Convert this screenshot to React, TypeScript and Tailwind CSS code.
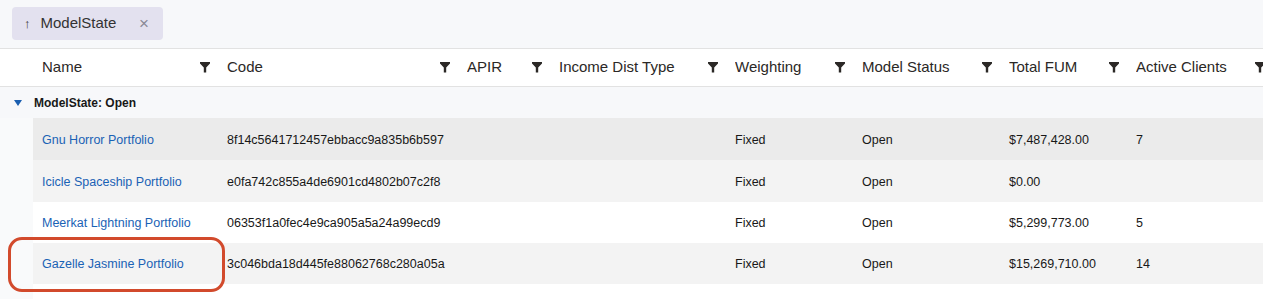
import React from 'react';

const columns = [
  { label: 'Name', w: 'w-[185px]' },
  { label: 'Code', w: 'w-[240px]' },
  { label: 'APIR', w: 'w-[92px]' },
  { label: 'Income Dist Type', w: 'w-[176px]' },
  { label: 'Weighting', w: 'w-[127px]' },
  { label: 'Model Status', w: 'w-[147px]' },
  { label: 'Total FUM', w: 'w-[127px]' },
  { label: 'Active Clients', w: 'w-[146px]' },
];

const rows = [
  { name: 'Gnu Horror Portfolio', code: '8f14c5641712457ebbacc9a835b6b597', fum: '$7,487,428.00', clients: '7', bg: 'bg-[#ebebeb]', h: 'h-[42px]' },
  { name: 'Icicle Spaceship Portfolio', code: 'e0fa742c855a4de6901cd4802b07c2f8', fum: '$0.00', clients: '', bg: 'bg-[#f3f3f3]', h: 'h-[42px]' },
  { name: 'Meerkat Lightning Portfolio', code: '06353f1a0fec4e9ca905a5a24a99ecd9', fum: '$5,299,773.00', clients: '5', bg: 'bg-white', h: 'h-[41px]' },
  { name: 'Gazelle Jasmine Portfolio', code: '3c046bda18d445fe88062768c280a05a', fum: '$15,269,710.00', clients: '14', bg: 'bg-[#f3f3f3]', h: 'h-[41px]' },
];

function Funnel() {
  return (
    <svg width="10" height="11" viewBox="0 0 10 11" className="shrink-0">
      <polygon points="0,0 10,0 10,1.6 6.2,5.6 6.2,10.5 3.8,10.5 3.8,5.6 0,1.6" fill="#2b2826" />
    </svg>
  );
}

function Cell({ w, children, className = '' }: { w: string; children?: React.ReactNode; className?: string }) {
  return <div className={`${w} shrink-0 pl-[9px] pr-1 whitespace-nowrap overflow-hidden ${className}`}>{children}</div>;
}

export default function App() {
  return (
    <div className="relative w-[1263px] h-[299px] overflow-hidden bg-white text-[#181818]" style={{ fontFamily: '"Liberation Sans", Arial, sans-serif' }}>
      {/* grouping bar */}
      <div className="h-[48px] bg-[#f7f8fa] pl-[12px] pt-[7px]">
        <div className="w-[151px] h-[33px] rounded-[4px] bg-[#e3e1ef] flex items-center pl-[12px] text-[15px] text-[#333]">
          <span className="text-[13px] mr-[10px]">↑</span>
          <span>ModelState</span>
          <span className="ml-auto mr-[14px] text-[#8a8a96] text-[17px] leading-none">×</span>
        </div>
      </div>

      {/* header */}
      <div className="flex h-[39px] items-center bg-white border-y border-[#e2e2e2]">
        <div className="w-[33px] shrink-0" />
        {columns.map((c) => (
          <div key={c.label} className={`${c.w} shrink-0 pl-[9px] pr-[8px] flex items-center text-[15px] text-[#2b2826]`}>
            <span className="truncate">{c.label}</span>
            <span className="ml-auto">
              <Funnel />
            </span>
          </div>
        ))}
      </div>

      {/* group row */}
      <div className="flex h-[31px] items-center bg-[#f7f8fa] text-[12px] font-bold text-[#181818]">
        <div className="w-[34px] shrink-0 flex justify-center pl-[2px]">
          <svg width="8" height="6" viewBox="0 0 8 6">
            <polygon points="0,0 8,0 4,6" fill="#1b5fb0" />
          </svg>
        </div>
        <span>ModelState: Open</span>
      </div>

      {/* data rows */}
      {rows.map((r) => (
        <div key={r.name} className={`flex ${r.h} items-center text-[12.5px]`}>
          <div className="w-[33px] shrink-0 self-stretch bg-[#f9fafb]" />
          <div className={`flex flex-1 self-stretch items-center pt-[2px] ${r.bg}`}>
            <Cell w="w-[185px]" className="text-[#1a62b5]">{r.name}</Cell>
            <Cell w="w-[240px]">{r.code}</Cell>
            <Cell w="w-[92px]" />
            <Cell w="w-[176px]" />
            <Cell w="w-[127px]">Fixed</Cell>
            <Cell w="w-[147px]">Open</Cell>
            <Cell w="w-[127px]">{r.fum}</Cell>
            <Cell w="w-[146px]">{r.clients}</Cell>
          </div>
        </div>
      ))}
      <div className="flex h-[15px]">
        <div className="w-[33px] shrink-0 bg-[#f9fafb]" />
      </div>

      {/* annotation */}
      <div className="absolute left-[8px] top-[237px] w-[217px] h-[55px] rounded-[14px] border-[3px] border-[#d24a2c] pointer-events-none" />
    </div>
  );
}
